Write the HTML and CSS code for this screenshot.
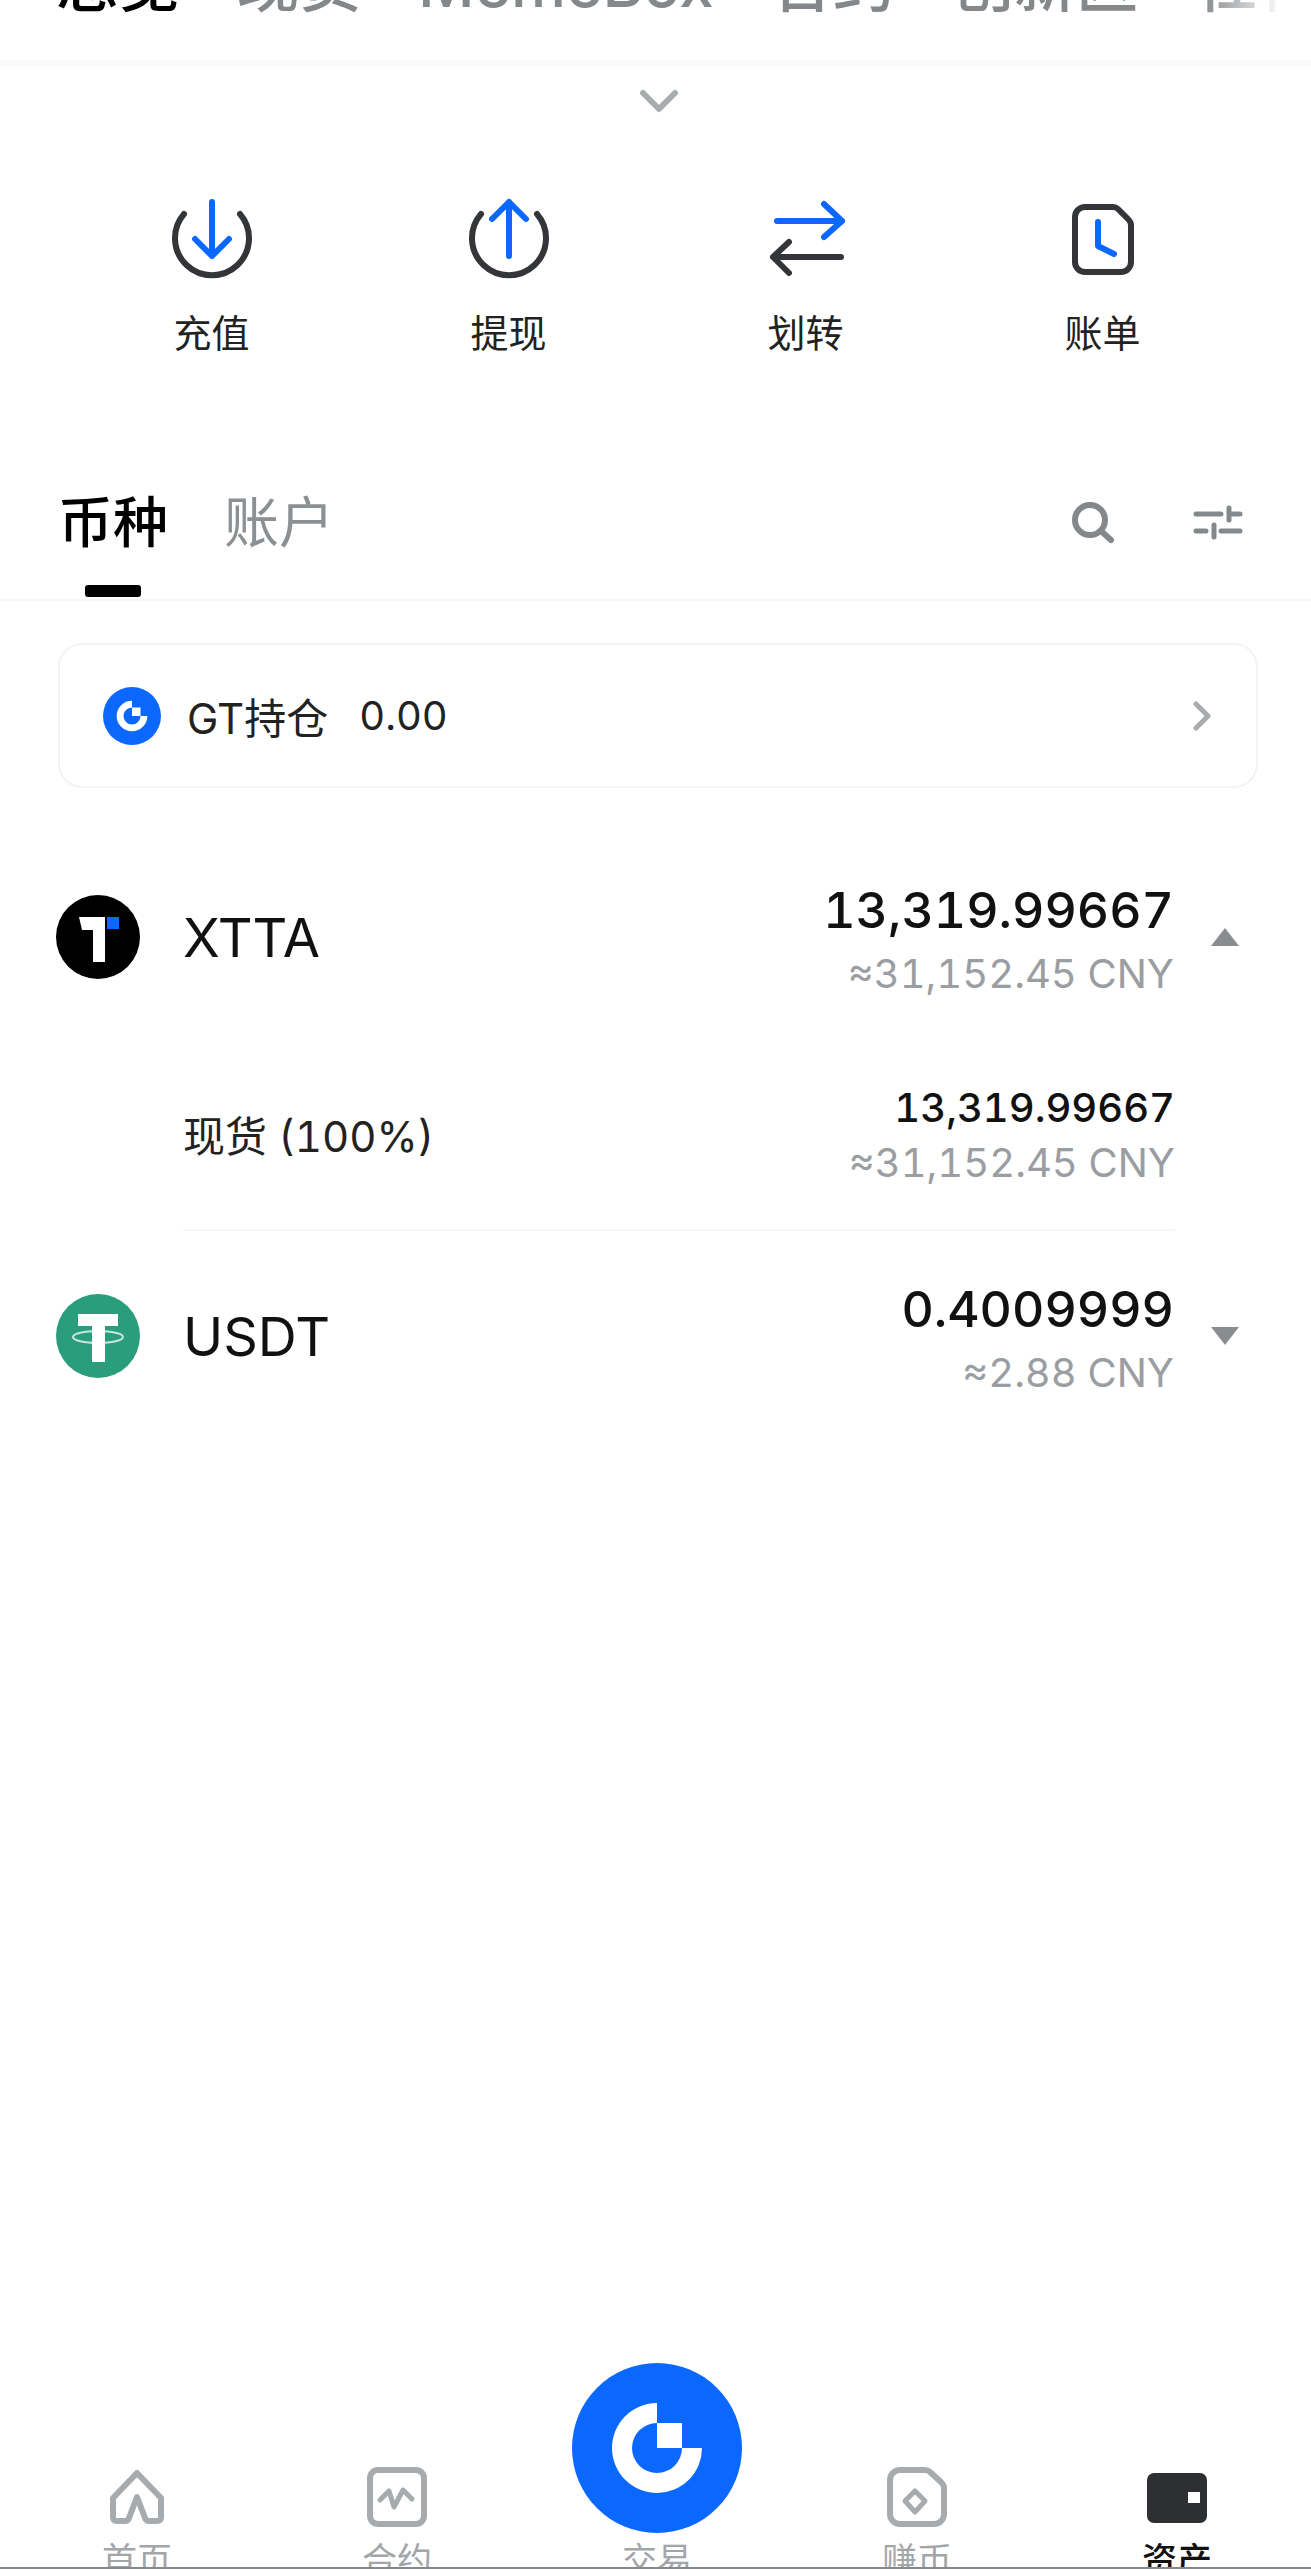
FILE: index.html
```html
<!doctype html>
<html>
  <head>
    <meta charset="utf-8">
    <meta name="viewport" content="width=device-width, initial-scale=1">
    <title>资产</title>
    <link rel="stylesheet" href="styles.css">
  </head>
  <body>
    <svg class="defs" width="0" height="0">
      <symbol id="gate" viewBox="0 0 170 170">
        <circle cx="85" cy="85" r="85" fill="#0a68ff"/>
        <path fill="#fff" d="M85 40A45 45 0 1 0 130 85H110A25 25 0 1 1 85 60Z"/>
        <rect x="85" y="60" width="25" height="25" fill="#fff"/>
      </symbol>
    </svg>

    <div class="page">
      <nav class="top-tabs">
        <a class="on">总览</a>
        <a>现货</a>
        <a>MemeBox</a>
        <a>合约</a>
        <a>创新区</a>
        <a>杠杆</a>
      </nav>

      <div class="more">
        <svg width="40" height="26" viewBox="0 0 40 26"><path class="line grey" d="M4 5L20 21L36 5"/></svg>
      </div>

      <div class="actions">
        <a class="action">
          <svg width="90" height="90" viewBox="0 0 90 90">
            <path class="line dark" d="M17 20A37 37 0 1 0 73 20"/>
            <path class="line blue" d="M45 8V62M28 45L45 62L62 45"/>
          </svg>
          <span>充值</span>
        </a>
        <a class="action">
          <svg width="90" height="90" viewBox="0 0 90 90">
            <path class="line dark" d="M17 20A37 37 0 1 0 73 20"/>
            <path class="line blue" d="M45 62V8M28 25L45 8L62 25"/>
          </svg>
          <span>提现</span>
        </a>
        <a class="action">
          <svg width="90" height="90" viewBox="0 0 90 90">
            <path class="line blue" d="M16 27H81M63 10L81 27L63 43"/>
            <path class="line dark" d="M80 63H12M28 48L12 63L28 79"/>
          </svg>
          <span>划转</span>
        </a>
        <a class="action">
          <svg width="90" height="90" viewBox="0 0 90 90">
            <path class="line dark" d="M27 13H55Q58 13 60 15L70 25Q73 28 73 31V68A10 10 0 0 1 63 78H27A10 10 0 0 1 17 68V23A10 10 0 0 1 27 13Z"/>
            <path class="line blue" d="M40 28V52L56 60"/>
          </svg>
          <span>账单</span>
        </a>
      </div>

      <div class="asset-tabs">
        <a class="asset-tab on">币种</a>
        <a class="asset-tab">账户</a>
        <div class="tools">
          <svg width="48" height="48" viewBox="0 0 48 48">
            <circle class="line tool" cx="21" cy="22" r="15"/>
            <path class="line tool" d="M32 33L42 42"/>
          </svg>
          <svg width="50" height="36" viewBox="0 0 50 36">
            <path class="line tool thin" d="M3 10H28M36 4V16M36 10H47M3 27H13M21 21V33M28 27H47"/>
          </svg>
        </div>
      </div>

      <a class="gt-card">
        <svg class="gt-logo" width="58" height="58"><use href="#gate"/></svg>
        <span class="gt-name">GT持仓</span>
        <span class="gt-value">0.00</span>
        <svg class="gt-arrow" width="20" height="30" viewBox="0 0 20 30"><path class="line grey thin" d="M4 3L16 15L4 27"/></svg>
      </a>

      <div class="asset">
        <svg class="coin" width="84" height="84" viewBox="0 0 84 84">
          <circle cx="42" cy="42" r="42" fill="#000"/>
          <path fill="#fff" d="M23 22H49V67H37V35H26Z"/>
          <rect x="51" y="22" width="12" height="12" fill="#0a68ff"/>
        </svg>
        <span class="coin-name">XTTA</span>
        <div class="amounts">
          <div class="amount">13,319.99667</div>
          <div class="worth">≈31,152.45 CNY</div>
        </div>
        <i class="caret up"></i>
      </div>

      <div class="sub-asset">
        <span class="sub-name">现货 (100%)</span>
        <div class="amounts">
          <div class="sub-amount">13,319.99667</div>
          <div class="sub-worth">≈31,152.45 CNY</div>
        </div>
      </div>

      <div class="asset usdt">
        <svg class="coin" width="84" height="84" viewBox="0 0 84 84">
          <circle cx="42" cy="42" r="42" fill="#2a9d7c"/>
          <path fill="#fff" d="M22 20H62V32H49V68H36V32H22Z"/>
          <ellipse cx="42" cy="43" rx="25" ry="6" fill="none" stroke="#fff" stroke-width="2" opacity=".75"/>
        </svg>
        <span class="coin-name">USDT</span>
        <div class="amounts">
          <div class="amount">0.4009999</div>
          <div class="worth">≈2.88 CNY</div>
        </div>
        <i class="caret down"></i>
      </div>

      <nav class="tabbar">
        <a class="tab">
          <svg width="60" height="60" viewBox="0 0 60 60">
            <path class="line nav" d="M30 6L6 31V50Q6 54 10 54H18Q21 54 22 51L30 30L38 51Q39 54 42 54H50Q54 54 54 50V31Z"/>
          </svg>
          <span>首页</span>
        </a>
        <a class="tab">
          <svg width="60" height="60" viewBox="0 0 60 60">
            <rect class="line nav" x="3" y="3" width="54" height="54" rx="8"/>
            <path class="line nav thin" d="M13 33L22 24L27 40L36 23L45 32"/>
          </svg>
          <span>合约</span>
        </a>
        <a class="tab trade">
          <svg width="170" height="170"><use href="#gate"/></svg>
          <span>交易</span>
        </a>
        <a class="tab">
          <svg width="60" height="60" viewBox="0 0 60 60">
            <path class="line nav" d="M13 3H38Q41 3 43 5L54 15Q57 18 57 21V47A10 10 0 0 1 47 57H13A10 10 0 0 1 3 47V13A10 10 0 0 1 13 3Z"/>
            <path class="line nav thin" d="M28 24L38 34L28 45L18 34Z"/>
          </svg>
          <span>赚币</span>
        </a>
        <a class="tab on">
          <svg width="60" height="60" viewBox="0 0 60 60">
            <rect x="0" y="6" width="60" height="50" rx="7" fill="#2d2f33"/>
            <rect x="41" y="25" width="12" height="11" fill="#fff"/>
          </svg>
          <span>资产</span>
        </a>
      </nav>
    </div>
  </body>
</html>
```

FILE: styles.css
```css
* {
  box-sizing: border-box;
}
html, body {
  margin: 0;
  background: #fff;
}
body {
  font-family: Inter, "Noto Sans CJK SC", sans-serif;
  font-variant-numeric: tabular-nums;
  color: #111;
}
.defs {
  display: block;
}
svg {
  display: block;
}
.page {
  position: relative;
  display: flex;
  flex-direction: column;
  height: 2569px;
  overflow: hidden;
}

/* icon strokes */
.line {
  fill: none;
  stroke-width: 6;
  stroke-linecap: round;
  stroke-linejoin: round;
}
.line.thin {
  stroke-width: 5;
}
.dark { stroke: #333538; }
.blue { stroke: #0a68ff; }
.grey { stroke: #a9acaf; }
.tool { stroke: #85888b; }
.nav { stroke: #a8abad; }

/* top tabs, cut off by the top of the screen */
.top-tabs {
  position: relative;
  flex: none;
  display: flex;
  gap: 57px;
  height: 66px;
  padding-left: 56px;
  overflow: hidden;
  border-bottom: 6px solid #f8f9f9;
  font-size: 62px;
  line-height: 62px;
  font-weight: 500;
  color: #85888b;
  white-space: nowrap;
}
.top-tabs a {
  margin-top: -46px;
}
.top-tabs a.on {
  color: #000;
}
.top-tabs::after {
  content: "";
  position: absolute;
  top: 0;
  right: 0;
  bottom: 0;
  width: 110px;
  background: linear-gradient(to right, rgba(255,255,255,0), #fff 75%);
}

.more {
  display: flex;
  justify-content: center;
  padding: 22px 0 0 6px;
}

.actions {
  display: grid;
  grid-template-columns: repeat(4, 297px);
  margin-top: 80px;
  padding-left: 63px;
}
.action {
  display: flex;
  flex-direction: column;
  align-items: center;
  font-size: 38px;
  line-height: 50px;
  color: #222;
}
.action span {
  margin-top: 24px;
}

/* coin / account switch */
.asset-tabs {
  display: flex;
  gap: 56px;
  margin-top: 129px;
  padding: 0 0 2px 58px;
  border-bottom: 2px solid #f5f6f6;
}
.asset-tab {
  display: flex;
  flex-direction: column;
  align-items: center;
  font-size: 55px;
  line-height: 70px;
  color: #8d9093;
}
.asset-tab.on {
  color: #000;
  font-weight: 500;
}
.asset-tab.on::after {
  content: "";
  width: 56px;
  height: 12px;
  margin-top: 28px;
  border-radius: 3px;
  background: #000;
}
.tools {
  display: flex;
  align-items: center;
  gap: 76px;
  height: 70px;
  margin-left: auto;
  padding-right: 68px;
}

.gt-card {
  flex: none;
  display: flex;
  align-items: center;
  height: 145px;
  margin: 42px 53px 0 58px;
  padding: 0 44px 0 43px;
  border: 2px solid #f2f3f4;
  border-radius: 24px;
  font-size: 40px;
  color: #222;
}
.gt-name {
  margin-left: 26px;
  font-size: 42px;
}
.gt-value {
  margin-left: 31px;
}
.gt-arrow {
  margin-left: auto;
}

/* asset rows */
.asset {
  flex: none;
  display: flex;
  align-items: center;
  margin-top: 80px;
  padding: 0 72px 0 56px;
}
.asset.usdt {
  margin-top: 36px;
}
.coin {
  flex: none;
}
.coin-name {
  margin-left: 43px;
  font-size: 54px;
}
.asset .amounts {
  padding-top: 10px;
}
.amounts {
  margin-left: auto;
  text-align: right;
  white-space: nowrap;
}
.amount {
  font-size: 50px;
  line-height: 64px;
  font-weight: 500;
}
.worth {
  font-size: 40px;
  line-height: 64px;
  color: #9a9da1;
}
.caret {
  flex: none;
  width: 0;
  height: 0;
  margin-left: 37px;
  border-left: 14px solid transparent;
  border-right: 14px solid transparent;
}
.caret.up {
  border-bottom: 18px solid #8a8d90;
}
.caret.down {
  border-top: 18px solid #8a8d90;
}

.sub-asset {
  flex: none;
  display: flex;
  align-items: center;
  margin: 74px 136px 0 183px;
  padding-bottom: 39px;
  border-bottom: 2px solid #f5f6f6;
}
.sub-name {
  margin-bottom: 4px;
  font-size: 42px;
  color: #222;
}
.sub-amount {
  font-size: 40px;
  line-height: 55px;
  font-weight: 500;
}
.sub-worth {
  font-size: 40px;
  line-height: 55px;
  color: #9a9da1;
}

/* bottom navigation, labels cut by the screen edge */
.tabbar {
  flex: none;
  display: grid;
  grid-template-columns: repeat(5, 260px);
  height: 206px;
  margin-top: auto;
  padding-left: 7px;
  overflow: hidden;
  border-bottom: 2px solid #85888b;
}
.tab {
  display: flex;
  flex-direction: column;
  align-items: center;
  padding-top: 104px;
  font-size: 35px;
  line-height: 40px;
  color: #a3a6a9;
}
.tab span {
  margin-top: 13px;
}
.tab.trade {
  padding-top: 0;
}
.tab.trade span {
  margin-top: 7px;
}
.tab.on {
  color: #111;
  font-weight: 500;
}
```
